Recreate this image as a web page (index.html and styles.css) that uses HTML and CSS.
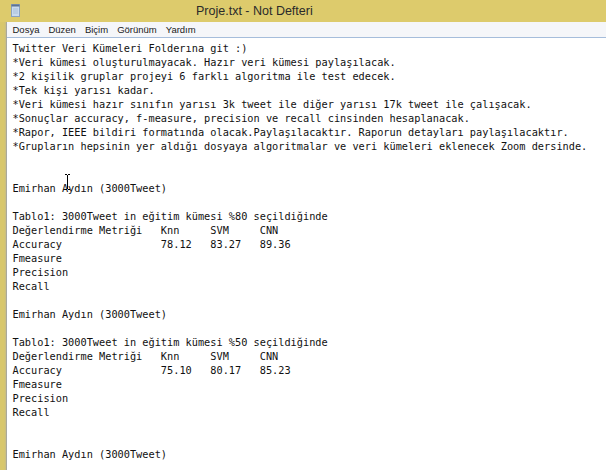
FILE: index.html
```html
<!DOCTYPE html>
<html lang="tr">
<head>
<meta charset="utf-8">
<title>Proje.txt - Not Defteri</title>
<link rel="stylesheet" href="styles.css">
</head>
<body>
<div class="window">
  <div class="titlebar">
    <svg class="app-icon" width="9" height="13" viewBox="0 0 9 13">
      <rect x="0.5" y="0.5" width="8" height="12" fill="#c9dbee" stroke="#8aa3c0"/>
      <rect x="0.5" y="0.5" width="8" height="2" fill="#5d7391"/>
      <line x1="2" y1="5" x2="7" y2="5" stroke="#a9bfd8"/>
      <line x1="2" y1="7" x2="7" y2="7" stroke="#a9bfd8"/>
      <line x1="2" y1="9" x2="7" y2="9" stroke="#a9bfd8"/>
    </svg>
    <div class="title">Proje.txt - Not Defteri</div>
  </div>
  <div class="frame">
    <div class="frame-edge"></div>
    <div class="client">
      <div class="menubar">
        <span class="menu-item">Dosya</span>
        <span class="menu-item">Düzen</span>
        <span class="menu-item">Biçim</span>
        <span class="menu-item">Görünüm</span>
        <span class="menu-item">Yardım</span>
      </div>
      <div class="editor">
<pre class="text">Twitter Veri Kümeleri Folderına git :)
*Veri kümesi oluşturulmayacak. Hazır veri kümesi paylaşılacak.
*2 kişilik gruplar projeyi 6 farklı algoritma ile test edecek.
*Tek kişi yarısı kadar.
*Veri kümesi hazır sınıfın yarısı 3k tweet ile diğer yarısı 17k tweet ile çalışacak.
*Sonuçlar accuracy, f-measure, precision ve recall cinsinden hesaplanacak.
*Rapor, IEEE bildiri formatında olacak.Paylaşılacaktır. Raporun detayları paylaşılacaktır.
*Grupların hepsinin yer aldığı dosyaya algoritmalar ve veri kümeleri eklenecek Zoom dersinde.


Emirhan Aydın (3000Tweet)

Tablo1: 3000Tweet in eğitim kümesi %80 seçildiğinde
Değerlendirme Metriği	Knn	SVM	CNN
Accuracy		78.12	83.27	89.36
Fmeasure
Precision
Recall

Emirhan Aydın (3000Tweet)

Tablo1: 3000Tweet in eğitim kümesi %50 seçildiğinde
Değerlendirme Metriği	Knn	SVM	CNN
Accuracy		75.10	80.17	85.23
Fmeasure
Precision
Recall


Emirhan Aydın (3000Tweet)</pre>
        <svg class="ibeam" width="7" height="16" viewBox="0 0 7 16">
          <path d="M1 0.5 H3 M4 0.5 H6 M3.5 1 V15 M1 15.5 H3 M4 15.5 H6" stroke="#000" stroke-width="1" fill="none"/>
        </svg>
      </div>
    </div>
  </div>
</div>
</body>
</html>
```
FILE: styles.css
```css
html, body {
  margin: 0;
  padding: 0;
  width: 606px;
  height: 470px;
  overflow: hidden;
  background: #ffffff;
}

.window {
  display: flex;
  flex-direction: column;
  width: 606px;
  height: 470px;
  background: #dccb6d;
}

.titlebar {
  height: 22px;
  flex: none;
  display: flex;
  align-items: center;
  background: #ddcb6c;
}

.app-icon {
  flex: none;
  width: 9px;
  height: 13px;
  margin-left: 11px;
  margin-top: -2px;
}

.title {
  flex: none;
  margin-left: 176px;
  font-family: "Liberation Sans", Arial, sans-serif;
  font-size: 12.5px;
  white-space: nowrap;
  color: #2a2a2a;
}

.frame {
  flex: 1;
  display: flex;
  min-height: 0;
}

.frame-edge {
  width: 6px;
  flex: none;
  background: linear-gradient(to right, #d8c76c 0, #d8c76c 4px, #c9bd84 6px);
  border-right: 1px solid #a9a99c;
}

.client {
  flex: 1;
  display: flex;
  flex-direction: column;
  min-width: 0;
}

.menubar {
  height: 15px;
  flex: none;
  display: flex;
  align-items: center;
  gap: 9px;
  padding-left: 5.5px;
  background: #f5f6f9;
  border-bottom: 1px solid #a6bddb;
  font-family: "Liberation Sans", Arial, sans-serif;
  font-size: 9.5px;
  color: #1a1a1a;
}

.editor {
  flex: 1;
  position: relative;
  background: #ffffff;
  overflow: hidden;
}

.text {
  margin: 0;
  padding: 3px 0 0 5.5px;
  font-family: "DejaVu Sans Mono", "Liberation Mono", monospace;
  font-size: 10.27px;
  line-height: 14px;
  tab-size: 8;
  -moz-tab-size: 8;
  white-space: pre;
  color: #111111;
}

.ibeam {
  position: absolute;
  left: 57px;
  top: 136px;
}
```
